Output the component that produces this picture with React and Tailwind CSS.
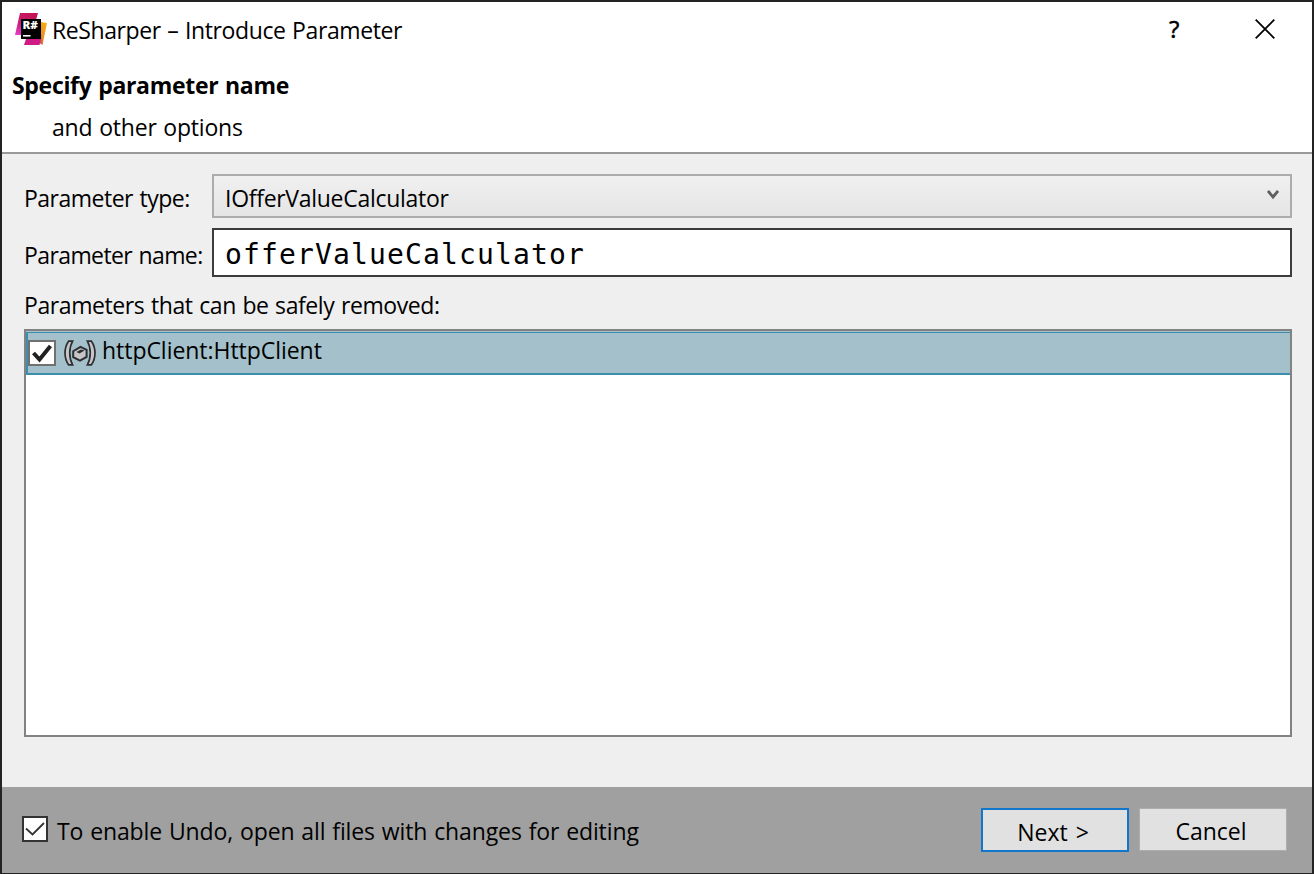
function Logo() {
  return (
    <svg width="32" height="33" viewBox="0 0 32 33" className="shrink-0">
      <defs>
        <linearGradient id="pink" x1="0.6" y1="0" x2="0.2" y2="1">
          <stop offset="0" stopColor="#c21456" />
          <stop offset="0.5" stopColor="#cc1a70" />
          <stop offset="1" stopColor="#e23bc4" />
        </linearGradient>
        <linearGradient id="gold" x1="1" y1="0" x2="0" y2="1">
          <stop offset="0" stopColor="#fdb60d" />
          <stop offset="0.5" stopColor="#e8912a" />
          <stop offset="1" stopColor="#c21456" />
        </linearGradient>
      </defs>
      <path d="M25 9L32 10L27.5 32L20 27Z" fill="url(#gold)" />
      <path d="M5 0H23L21 7L6 22H0Z" fill="url(#pink)" />
      <path d="M11 26H26L24.5 32H9Z" fill="#cf1b86" />
      <rect x="6" y="6" width="20" height="20" fill="#000" />
      <text x="7.5" y="16" fontFamily="Open Sans, sans-serif" fontWeight="800" fontSize="10.5" textLength="15.5" lengthAdjust="spacingAndGlyphs" fill="#fff">R#</text>
      <rect x="8" y="22" width="7.5" height="1.6" fill="#fff" />
    </svg>
  );
}

function ParameterIcon() {
  return (
    <svg width="32" height="26" viewBox="0 0 32 26" fill="none" className="shrink-0">
      <path d="M4.6 1.2H8.6C4.8 8 4.8 18 8.6 24.8H4.6C-.2 18 -.2 8 4.6 1.2Z" fill="#c9c5c6" stroke="#2c2f33" strokeWidth="1.7" />
      <path d="M27.4 1.2H23.4C27.2 8 27.2 18 23.4 24.8H27.4C32.2 18 32.2 8 27.4 1.2Z" fill="#c9c5c6" stroke="#2c2f33" strokeWidth="1.7" />
      <path d="M16.5 6.8L22.6 9.8V16.8L16 20.6L9.2 17.2V11.2Z" fill="#c9c5c6" stroke="#2c2f33" strokeWidth="2" />
      <path d="M12.4 12L17 9.4L20.5 10.6L15.5 13.6Z" fill="#2c2f33" />
    </svg>
  );
}

export default function App() {
  return (
    <div className="flex h-[874px] w-[1314px] flex-col overflow-hidden border-2 border-b border-[#232324] bg-[#efefef] font-['Open_Sans',sans-serif] text-[23px] leading-8 whitespace-nowrap text-black">
      <header className="h-[152px] shrink-0 border-b-2 border-[#999] bg-white">
        <div className="flex h-14 items-start pt-[11px] pl-[13px]">
          <Logo />
          <h1 className="mt-px ml-[5px] tracking-[-0.4px] [word-spacing:1px]">ReSharper – Introduce Parameter</h1>
          <span className="mr-[74px] ml-auto w-3 font-['Noto_Sans',sans-serif] text-[24px] [-webkit-text-stroke:0.4px_black]">?</span>
          <svg width="20" height="20" viewBox="0 0 20 20" className="mt-1.5 mr-[37px] shrink-0">
            <path d="M.7 .7L19.3 19.3M19.3 .7L.7 19.3" stroke="#000" strokeWidth="1.8" />
          </svg>
        </div>
        <h2 className="mt-[11px] pl-[10px] font-bold tracking-[-0.31px] [word-spacing:1px]">Specify parameter name</h2>
        <p className="mt-[10px] pl-[50px] tracking-[-0.2px] [word-spacing:1px]">and other options</p>
      </header>

      <main className="flex h-[633px] shrink-0 flex-col px-[22px] pt-5 pr-5">
        <div className="flex h-11 items-center">
          <label className="w-[188px] pt-[3px] tracking-[-0.5px] [word-spacing:1px]">Parameter type:</label>
          <div className="flex h-11 grow items-center border-2 border-[#acacac] bg-linear-to-b from-[#f0f0f0] to-[#e5e5e5] pr-[11px] pl-[11px]">
            <span className="pt-1 tracking-[-0.29px]">IOfferValueCalculator</span>
            <svg width="12" height="10" viewBox="0 0 12 10" className="mb-0.5 ml-auto">
              <path d="M1 1L6 7L11 1" fill="none" stroke="#5f5f5f" strokeWidth="2.8" />
            </svg>
          </div>
        </div>
        <div className="mt-[10px] flex h-[49px] items-center">
          <label className="w-[188px] pt-1 tracking-[-0.6px] [word-spacing:1px]">Parameter name:</label>
          <div className="flex h-[49px] grow items-center border-2 border-[#3c3c3c] bg-white pt-1 pl-[11px] font-['DejaVu_Sans_Mono',monospace] text-[28px] tracking-[1.14px]">offerValueCalculator</div>
        </div>
        <p className="mt-3 tracking-[-0.41px] [word-spacing:1px]">Parameters that can be safely removed:</p>
        <div className="mt-2 h-[408px] border-2 border-[#828282] bg-white">
          <div className="h-11 border-t border-[#a3c0cb]">
            <div className="flex h-[43px] items-center border-t border-b-2 border-l-2 border-[#3d8eac] bg-[#a3c0cb]">
              <div className="flex h-[26px] w-7 shrink-0 items-center justify-center border-2 border-[#707070] bg-white">
                <svg width="20" height="19" viewBox="0 0 20 19">
                  <path d="M1.5 9L7.5 15.5L18.5 2" fill="none" stroke="#212121" strokeWidth="4" />
                </svg>
              </div>
              <div className="ml-2"><ParameterIcon /></div>
              <span className="mb-1.5 ml-1.5 tracking-[-0.04px]">httpClient:HttpClient</span>
            </div>
          </div>
        </div>
      </main>

      <footer className="flex grow items-center bg-[#a0a0a0] pr-[25px] pb-px pl-5">
        <div className="mb-0.5 flex h-[26px] w-[26px] items-center justify-center border-2 border-[#333] bg-white">
          <svg width="20" height="16" viewBox="0 0 20 16">
            <path d="M1 7.5L7.5 13.5L19 2" fill="none" stroke="#333" strokeWidth="1.8" />
          </svg>
        </div>
        <span className="ml-[9px] pt-[2px] tracking-[-0.11px] [word-spacing:1px]">To enable Undo, open all files with changes for editing</span>
        <button className="ml-auto h-11 w-[148px] border-2 border-[#1177cc] bg-[#e1e1e1] pt-1 pr-1 [word-spacing:2px]">Next &gt;</button>
        <button className="ml-[10px] h-[43px] w-[148px] border border-[#adadad] bg-[#e1e1e1] pt-[3px] pr-1">Cancel</button>
      </footer>
    </div>
  );
}
